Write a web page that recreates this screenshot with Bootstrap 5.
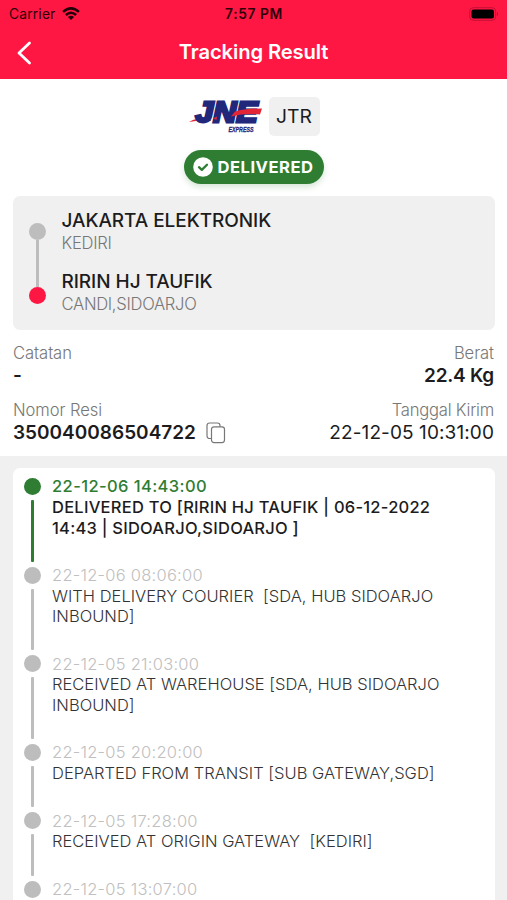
<!DOCTYPE html>
<html lang="id">
<head>
<meta charset="utf-8">
<meta name="viewport" content="width=device-width, initial-scale=1">
<title>Tracking Result</title>
<link href="https://cdn.jsdelivr.net/npm/bootstrap@5.3.0/dist/css/bootstrap.min.css" rel="stylesheet">
<style>
  body { font-family: Inter, "Liberation Sans", sans-serif; color: #1c1c1e; height: 900px; overflow: hidden; }
  .app-top { background: #ff1744; height: 79px; }
  .status-row { height: 28px; display: grid; grid-template-columns: 1fr auto 1fr; font-size: 13.8px; color: #2d0009; padding: 0 8px 0 9px; }
  .s-carrier { letter-spacing: .18px; }
  .s-time { letter-spacing: .6px; }
  .title-row { height: 51px; display: grid; grid-template-columns: 1fr auto 1fr; padding: 0 16px 2px; }
  .title-row h1 { font-size: 20.2px; letter-spacing: -.1px; }
  .service-row { height: 40px; margin-top: 1px; padding-left: 1px; }
  .service-tag { background: #f0f0f0; width: 51px; height: 39px; border-radius: 5px; font-size: 19.3px; }
  .status-pill { background: #2e7d32; width: 140px; height: 34px; margin-top: 14px; font-size: 16.6px; letter-spacing: .5px; box-shadow: 0 3px 6px rgba(46,125,50,.2); }
  .route-panel { background: #f0f0f0; margin: 12px 12px 0 13px; height: 134px; border-radius: 7px; padding: 13px 16px; }
  .route-track { width: 17px; margin-right: 15.5px; padding-top: 14px; }
  .route-names { height: 106.4px; }
  .dot { width: 17px; height: 17px; border-radius: 50%; background: #bdbdbd; flex: none; }
  .dot-end { background: #ff1744; }
  .route-line { width: 3px; height: 47px; background: #bdbdbd; }
  .party { font-size: 19px; line-height: 24px; font-weight: 500; letter-spacing: -.06px; white-space: nowrap; }
  .soft-label { font-size: 16.6px; line-height: 21px; font-weight: 300; letter-spacing: -.06px; color: #777; white-space: nowrap; }
  .soft-label.s-place { letter-spacing: -.3px; }
  .soft-label.s-sent { letter-spacing: -.22px; }
  .detail-value { font-size: 19px; line-height: 24.4px; white-space: nowrap; }
  .s-berat { letter-spacing: -.25px; }
  .s-tanggal { letter-spacing: .1px; }
  .details { padding: 13px 13px 0; height: 126px; }
  .detail-pair { height: 57px; }
  .history { background: #f0f0f0; height: 444px; padding: 12px 12px 0 13px; }
  .history-card { border-radius: 7px 7px 0 0; padding: 8.3px 11px 0; height: 432px; overflow: hidden; }
  .event { height: 88.7px; }
  .event.one-line { height: 68.4px; }
  .event-rail { width: 17px; margin: 1.6px 11px -.6px 0; }
  .event-line { width: 3px; background: #bdbdbd; margin: 5px 0 4px; border-radius: 1px; }
  .event-text { font-size: 16.5px; line-height: 20.7px; font-weight: 300; letter-spacing: .02px; white-space: pre; color: #333; }
  .event-date { color: #c0c0c0; letter-spacing: .25px; }
  .latest .event-text { font-weight: 500; letter-spacing: .24px; color: #1c1c1e; }
  .latest .event-date { color: #2e7d32; letter-spacing: .4px; }
  .latest .dot, .latest .event-line { background: #2e7d32; }
</style>
</head>
<body class="bg-white">
<header class="app-top">
  <div class="status-row align-items-center">
    <div class="d-flex align-items-center"><span class="s-carrier">Carrier</span>
      <svg width="18" height="14" viewBox="0 0 19 15" fill="none" stroke="#220007" stroke-width="2.700" style="margin-left:7px"><path d="M1 5.200Q9.500-2.300 18 5.200M4 8.600Q9.500 3.700 15 8.600"/><path d="M6.200 10.700Q9.500 7.800 12.800 10.700L9.500 14Z" fill="#220007" stroke="none"/></svg>
    </div>
    <span class="fw-semibold s-time">7:57 PM</span>
    <svg class="ms-auto" width="30" height="14" viewBox="0 0 30 14"><rect x=".7" y=".7" width="26" height="12.600" rx="3.600" fill="none" stroke="#c41036"/><rect x="2.500" y="2.500" width="22.500" height="9" rx="2" fill="#000"/><path d="M28 5q2 2 0 4z" fill="#a40c2b"/></svg>
  </div>
  <div class="title-row align-items-center text-white">
    <svg width="16" height="24" viewBox="0 0 16 24" fill="none" stroke="#fff" stroke-width="2.800" stroke-linecap="round" stroke-linejoin="round"><path d="M13.500 2 3 12 13.500 22"/></svg>
    <h1 class="m-0 fw-semibold">Tracking Result</h1><span></span>
  </div>
</header>
<main>
  <section class="d-flex flex-column align-items-center pt-3">
    <div class="service-row d-flex align-items-center">
      <svg class="me-1" width="76" height="40" viewBox="0 0 76 40" font-family="Liberation Sans, sans-serif" font-weight="700" font-style="italic" fill="#21277b">
        <path d="M0 26Q8 21 20 21.500L22 25Q11 23.500 0 26Z" fill="#e32636"/>
        <text x="6.500" y="26" font-size="29" textLength="62" lengthAdjust="spacingAndGlyphs" stroke="#21277b" stroke-width="2.800">JNE</text>
        <path d="M24 22.500 28 20.500 27.500 24Z" fill="#e32636"/>
        <path d="M46 15.500Q56 12.500 73 12.500L71 18.500Q56 17 42 20.500Z" fill="#e32636"/>
        <text x="39.500" y="36" font-size="8" textLength="25" lengthAdjust="spacingAndGlyphs" stroke="#21277b" stroke-width=".3">EXPRESS</text>
      </svg>
      <span class="service-tag d-flex align-items-center justify-content-center">JTR</span>
    </div>
    <div class="status-pill rounded-pill d-flex align-items-center justify-content-center text-white fw-bold">
      <svg class="me-1" width="20" height="20" viewBox="0 0 20 20"><circle cx="10" cy="10" r="9.800" fill="#fff"/><path d="m6 10.200 2.800 2.700 5.200-5.200" fill="none" stroke="#2e7d32" stroke-width="2.300" stroke-linecap="round" stroke-linejoin="round"/></svg>
      <span>DELIVERED</span>
    </div>
  </section>
  <section class="route-panel d-flex">
    <div class="route-track d-flex flex-column align-items-center"><span class="dot"></span><span class="route-line"></span><span class="dot dot-end"></span></div>
    <div class="route-names d-flex flex-column justify-content-between">
      <div><div class="party">JAKARTA ELEKTRONIK</div><div class="soft-label s-place">KEDIRI</div></div>
      <div><div class="party">RIRIN HJ TAUFIK</div><div class="soft-label s-place">CANDI,SIDOARJO</div></div>
    </div>
  </section>
  <section class="details">
    <div class="detail-pair d-flex justify-content-between">
      <div><div class="soft-label">Catatan</div><div class="detail-value fw-semibold">-</div></div>
      <div class="text-end"><div class="soft-label">Berat</div><div class="detail-value fw-semibold s-berat">22.4 Kg</div></div>
    </div>
    <div class="d-flex justify-content-between">
      <div><div class="soft-label">Nomor Resi</div><div class="detail-value fw-semibold d-flex align-items-center"><span>350040086504722</span>
        <svg width="20" height="22" viewBox="0 0 20 22" fill="#fff" stroke="#777" stroke-width="1.200" style="margin-left:10px"><rect x="1" y="1" width="13" height="15.500" rx="2.500"/><rect x="5.500" y="4.800" width="13" height="15.800" rx="2.500"/></svg></div></div>
      <div class="text-end"><div class="soft-label s-sent">Tanggal Kirim</div><div class="detail-value s-tanggal">22-12-05 10:31:00</div></div>
    </div>
  </section>
  <section class="history">
    <div class="history-card bg-white">
      <div class="event latest d-flex"><div class="event-rail d-flex flex-column align-items-center"><span class="dot"></span><span class="event-line flex-grow-1"></span></div><div class="event-text"><div class="event-date">22-12-06 14:43:00</div><div>DELIVERED TO [RIRIN HJ TAUFIK | 06-12-2022
14:43 | SIDOARJO,SIDOARJO ]</div></div></div>
      <div class="event d-flex"><div class="event-rail d-flex flex-column align-items-center"><span class="dot"></span><span class="event-line flex-grow-1"></span></div><div class="event-text"><div class="event-date">22-12-06 08:06:00</div><div>WITH DELIVERY COURIER  [SDA, HUB SIDOARJO
INBOUND]</div></div></div>
      <div class="event d-flex"><div class="event-rail d-flex flex-column align-items-center"><span class="dot"></span><span class="event-line flex-grow-1"></span></div><div class="event-text"><div class="event-date">22-12-05 21:03:00</div><div>RECEIVED AT WAREHOUSE [SDA, HUB SIDOARJO
INBOUND]</div></div></div>
      <div class="event one-line d-flex"><div class="event-rail d-flex flex-column align-items-center"><span class="dot"></span><span class="event-line flex-grow-1"></span></div><div class="event-text"><div class="event-date">22-12-05 20:20:00</div><div>DEPARTED FROM TRANSIT [SUB GATEWAY,SGD]</div></div></div>
      <div class="event one-line d-flex"><div class="event-rail d-flex flex-column align-items-center"><span class="dot"></span><span class="event-line flex-grow-1"></span></div><div class="event-text"><div class="event-date">22-12-05 17:28:00</div><div>RECEIVED AT ORIGIN GATEWAY  [KEDIRI]</div></div></div>
      <div class="event one-line d-flex"><div class="event-rail d-flex flex-column align-items-center"><span class="dot"></span></div><div class="event-text"><div class="event-date">22-12-05 13:07:00</div></div></div>
    </div>
  </section>
</main>
<script src="https://cdn.jsdelivr.net/npm/bootstrap@5.3.0/dist/js/bootstrap.bundle.min.js"></script>
</body>
</html>
